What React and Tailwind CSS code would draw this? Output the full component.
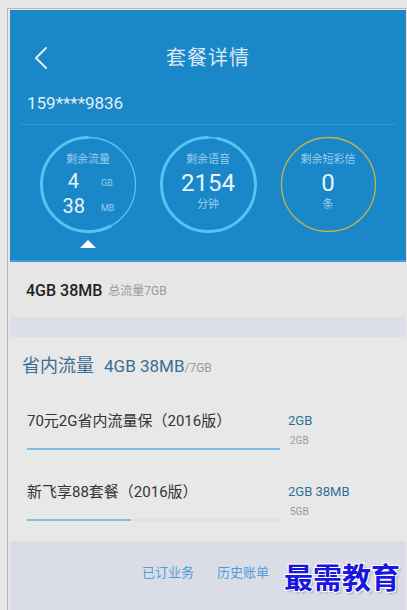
import React from 'react'

const font = { fontFamily: 'Roboto, "Noto Sans CJK SC", sans-serif' }

function Ring({ pct, color = '#55c4f2', thin = false }) {
  const r = 47
  const c = 2 * Math.PI * r
  return (
    <svg width="97" height="97" viewBox="0 0 97 97" className="absolute inset-0">
      <g transform="translate(97 0) scale(-1 1) rotate(-90 48.5 48.5)">
        <circle cx="48.5" cy="48.5" r={r} fill="none" stroke={color} strokeWidth="1.3" />
        {!thin && (
          <circle
            cx="48.5"
            cy="48.5"
            r={r}
            fill="none"
            stroke={color}
            strokeWidth="3"
            strokeDasharray={`${c * pct} ${c}`}
          />
        )}
      </g>
    </svg>
  )
}

function Stat({ label, children, pct, color, thin }) {
  return (
    <div className="relative w-[97px] h-[97px] flex flex-col items-center">
      <Ring pct={pct} color={color} thin={thin} />
      <div className="mt-[17px] text-[11px] leading-[14px] text-[#9ccfee]">{label}</div>
      {children}
    </div>
  )
}

const plans = [
  { name: '70元2G省内流量保（2016版）', left: '2GB', total: '2GB', pct: 1 },
  { name: '新飞享88套餐（2016版）', left: '2GB 38MB', total: '5GB', pct: 0.41 },
]

export default function App() {
  return (
    <div className="w-[407px] h-[610px] overflow-hidden bg-[#e7e7e7] pl-[7px] pt-[8px]" style={font}>
      <div className="h-full border-l border-t border-[#b9b9b9] pl-[2px] pt-[1px] pr-[1px]">
        <div className="w-[396px] h-full flex flex-col">
          {/* Header */}
          <div className="bg-[#1987c8] border-b-2 border-[#3d9fda]">
            <div className="relative h-[76px] pt-[20px] flex items-center justify-center">
              <svg width="14" height="24" viewBox="0 0 14 24" className="absolute left-[24px] top-[36px]">
                <path d="M12 2 L2 12 L12 22" fill="none" stroke="#e2eef8" strokeWidth="2" strokeLinecap="round" strokeLinejoin="round" />
              </svg>
              <span className="text-[20px] leading-[28px] text-[#dce9f4] tracking-[1px]">套餐详情</span>
            </div>
            <div className="mx-[10px] mt-[5px] pb-[8px] border-b border-[#2e95d3]">
              <span className="pl-[7px] text-[17px] leading-[24px] text-[#e3eef7]">159****9836</span>
            </div>
            <div className="mt-[11px] flex justify-center gap-[23px]">
              <Stat label="剩余流量" pct={0.58}>
                <div className="mt-[2px] w-full grid grid-cols-[1fr_1fr] text-[#e8f3fb]">
                  <span className="text-right pr-[9px] text-[20px] leading-[25px]">4</span>
                  <span className="pl-[13px] pt-[7px] text-[9px] leading-[14px] text-[#9ccfee]">GB</span>
                  <span className="text-right pr-[3px] text-[20px] leading-[25px]">38</span>
                  <span className="pl-[13px] pt-[7px] text-[9px] leading-[14px] text-[#9ccfee]">MB</span>
                </div>
              </Stat>
              <Stat label="剩余语音" pct={0.97}>
                <div className="mt-[1px] text-[24px] leading-[30px] text-[#e8f3fb]">2154</div>
                <div className="text-[11px] leading-[14px] text-[#9ccfee]">分钟</div>
              </Stat>
              <Stat label="剩余短彩信" color="#c0b44e" thin>
                <div className="mt-[1px] text-[24px] leading-[30px] text-[#e8f3fb]">0</div>
                <div className="text-[11px] leading-[14px] text-[#9ccfee]">条</div>
              </Stat>
            </div>
            <div className="mt-[7px] pb-[12px] flex justify-center gap-[23px]">
              <div className="w-[97px] flex justify-center">
                <div className="w-0 h-0 border-l-[8px] border-r-[8px] border-b-[8px] border-l-transparent border-r-transparent border-b-white" />
              </div>
              <div className="w-[97px]" />
              <div className="w-[97px]" />
            </div>
          </div>

          {/* Total */}
          <div className="h-[55px] pl-[16px] pt-[2px] flex items-center gap-[6px] bg-[#e6e6e6]">
            <span className="text-[16px] font-medium text-[#232323]">4GB 38MB</span>
            <span className="text-[12px] text-[#9a9a9a]">总流量7GB</span>
          </div>
          <div className="h-[20px] bg-[#dcdfe7]" />

          {/* Card */}
          <div className="h-[204px] bg-[#e8e8e8] rounded-t-[4px] pt-[16px]">
            <div className="pl-[12px] flex items-baseline text-[#3a6e92]">
              <span className="text-[18px] leading-[26px]">省内流量</span>
              <span className="ml-[10px] text-[17px] leading-[26px]">4GB 38MB</span>
              <span className="text-[12px] text-[#9a9a9a]">/7GB</span>
            </div>
            <div className="mt-[31px] flex flex-col gap-[31px]">
              {plans.map(p => (
                <div key={p.name} className="pl-[17px] flex">
                  <div className="w-[253px]">
                    <div className="text-[15px] leading-[22px] text-[#343434]">{p.name}</div>
                    <div className="mt-[16px] h-[2px] bg-[#dbe2e8]">
                      <div className="h-full bg-[#80bde2]" style={{ width: `${p.pct * 100}%` }} />
                    </div>
                  </div>
                  <div className="ml-[8px] flex flex-col">
                    <span className="text-[13px] leading-[22px] text-[#2f6f99]">{p.left}</span>
                    <span className="mt-[2px] pl-[2px] text-[10px] leading-[14px] text-[#9a9a9a]">{p.total}</span>
                  </div>
                </div>
              ))}
            </div>
          </div>

          {/* Footer */}
          <div className="flex-1 bg-[#dadde6] flex items-start justify-end pr-[6px] pt-[17px]">
            <span className="mt-[5px] text-[13px] leading-[20px] text-[#4c9fd5]">已订业务</span>
            <span className="ml-[23px] mt-[5px] text-[13px] leading-[20px] text-[#4c9fd5]">历史账单</span>
            <span
              className="ml-[15px] text-[29px] leading-[36px] font-bold text-[#1a17e0]"
              style={{ fontFamily: '"Noto Sans CJK SC", sans-serif', textShadow: '1px 1px 0 #fff, -1px -1px 0 #fff, 1px -1px 0 #fff, -1px 1px 0 #fff, 2px 2px 2px rgba(0,0,0,.25)' }}
            >
              最需教育
            </span>
          </div>
        </div>
      </div>
    </div>
  )
}
